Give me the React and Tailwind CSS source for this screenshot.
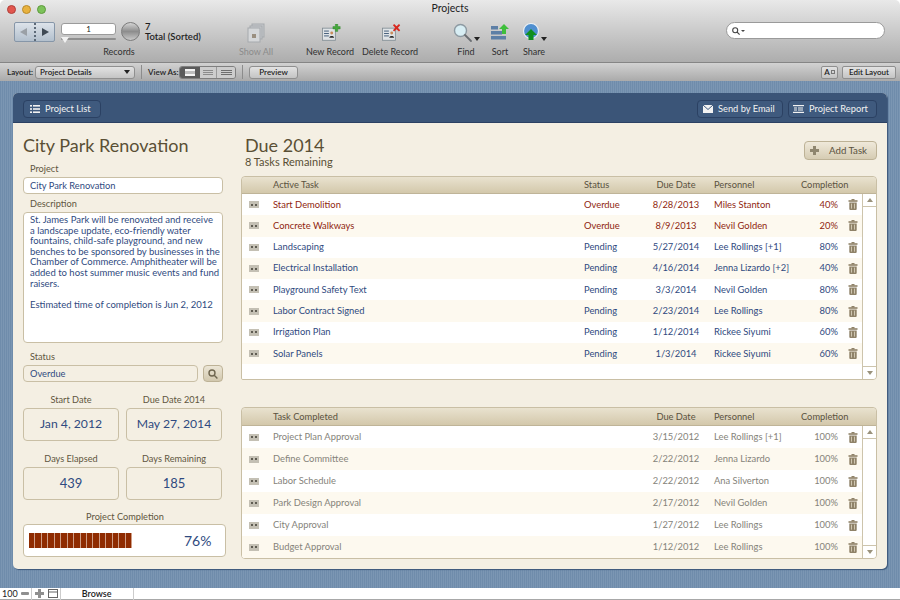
import React from "react";

const activeTasks = [
  { name: "Start Demolition", status: "Overdue", due: "8/28/2013", who: "Miles Stanton", pct: "40%", late: true },
  { name: "Concrete Walkways", status: "Overdue", due: "8/9/2013", who: "Nevil Golden", pct: "20%", late: true },
  { name: "Landscaping", status: "Pending", due: "5/27/2014", who: "Lee Rollings [+1]", pct: "80%" },
  { name: "Electrical Installation", status: "Pending", due: "4/16/2014", who: "Jenna Lizardo [+2]", pct: "40%" },
  { name: "Playground Safety Text", status: "Pending", due: "3/3/2014", who: "Nevil Golden", pct: "80%" },
  { name: "Labor Contract Signed", status: "Pending", due: "2/23/2014", who: "Lee Rollings", pct: "80%" },
  { name: "Irrigation Plan", status: "Pending", due: "1/12/2014", who: "Rickee Siyumi", pct: "60%" },
  { name: "Solar Panels", status: "Pending", due: "1/3/2014", who: "Rickee Siyumi", pct: "60%" },
];

const doneTasks = [
  { name: "Project Plan Approval", due: "3/15/2012", who: "Lee Rollings [+1]" },
  { name: "Define Committee", due: "2/22/2012", who: "Jenna Lizardo" },
  { name: "Labor Schedule", due: "2/22/2012", who: "Ana Silverton" },
  { name: "Park Design Approval", due: "2/17/2012", who: "Nevil Golden" },
  { name: "City Approval", due: "1/27/2012", who: "Lee Rollings" },
  { name: "Budget Approval", due: "1/12/2012", who: "Lee Rollings" },
];

const descriptionLines = [
  "St. James Park will be renovated and receive",
  "a landscape update, eco-friendly water",
  "fountains, child-safe playground, and new",
  "benches to be sponsored by businesses in the",
  "Chamber of Commerce. Amphitheater will be",
  "added to host summer music events and fund",
  "raisers.",
];

const gridCols = "grid grid-cols-[31px_311px_62px_60px_8px_81px_43px_26px] items-center";

function TrashIcon() {
  return (
    <svg width="10" height="11" viewBox="0 0 10 11" fill="#8f8268">
      <rect x="3.5" y="0" width="3" height="1.5" />
      <rect x="0.5" y="1.2" width="9" height="1.6" />
      <path d="M1.3 3.4h7.4v6.6a1 1 0 0 1-1 1H2.3a1 1 0 0 1-1-1z" />
      <rect x="3" y="4.6" width="1" height="5" fill="#cfc6b0" />
      <rect x="6" y="4.6" width="1" height="5" fill="#cfc6b0" />
    </svg>
  );
}

function RowHandle() {
  return (
    <div className="ml-[7px] flex h-[7px] w-[10px] items-center justify-center gap-[2px] bg-[#c4c0b4]">
      <span className="h-[2px] w-[2px] bg-[#5f5c52]" />
      <span className="h-[2px] w-[2px] bg-[#5f5c52]" />
    </div>
  );
}

function RecordIcon({ badge }) {
  return (
    <svg width="21" height="18" viewBox="0 0 26 22">
      <rect x="3" y="5" width="16" height="15" fill="#dfe3e6" stroke="#7f8a92" />
      <rect x="5" y="8" width="6" height="1.2" fill="#46607c" />
      <rect x="5" y="11" width="6" height="1.2" fill="#46607c" />
      <rect x="5" y="14" width="6" height="1.2" fill="#46607c" />
      <circle cx="14.5" cy="11" r="1.8" fill="#c98d5c" />
      <path d="M11.5 17c0-3 6-3 6 0z" fill="#2b2b2b" />
      {badge === "plus" && <path d="M16 3h3V0h3v3h3v3h-3v3h-3V6h-3z" fill="#45a83c" stroke="#2f7f2a" strokeWidth="0.5" />}
      {badge === "x" && <path d="M16 1.5 17.5 0 20.5 2.5 23.5 0 25 1.5 22.2 4.5 25 7.5 23.5 9 20.5 6.5 17.5 9 16 7.5 18.8 4.5z" fill="#d8281f" />}
    </svg>
  );
}

function ToolItem({ width, label, muted, children }) {
  return (
    <div className={`flex flex-col items-center ${width}`}>
      <div className="flex h-[22px] items-center justify-center">{children}</div>
      <div className={`mt-[2px] whitespace-nowrap text-[9px] leading-[12px] ${muted ? "text-[#8b8b8b]" : "text-[#303030]"}`}>{label}</div>
    </div>
  );
}

function DownCaret() {
  return <span className="ml-[1px] mt-[12px] h-0 w-0 border-x-[3px] border-t-[4px] border-x-transparent border-t-[#222]" />;
}

function Label({ children, className = "" }) {
  return <div className={`h-[13px] text-[9.2px] leading-[13px] text-[#5f5640] ${className}`}>{children}</div>;
}

function StatBox({ label, value, size }) {
  return (
    <div className="flex w-[96px] flex-col">
      <Label className="text-center">{label}</Label>
      <div className={`mt-[2px] flex h-[33px] items-center justify-center rounded-[4px] border border-[#c9bfa5] text-[#2f4a80] ${size}`}>
        {value}
      </div>
    </div>
  );
}

function HeaderButton({ icon, label, width }) {
  return (
    <div className={`flex h-[18px] items-center rounded-[4px] border border-[#2b4163] bg-[#3f5a7e] text-[9.3px] text-[#f2f2f2] ${width}`}>
      {icon}
      <span>{label}</span>
    </div>
  );
}

function Scrollbar() {
  return (
    <div className="flex w-[14px] flex-col justify-between border-l border-[#cdc4ac] bg-white">
      <div className="flex h-[13px] items-center justify-center border-b border-[#cdc4ac]">
        <span className="h-0 w-0 border-x-[3px] border-b-[4px] border-x-transparent border-b-[#9a927c]" />
      </div>
      <div className="flex h-[13px] items-center justify-center border-t border-[#cdc4ac]">
        <span className="h-0 w-0 border-x-[3px] border-t-[4px] border-x-transparent border-t-[#9a927c]" />
      </div>
    </div>
  );
}

function TableHeader({ first, status, h }) {
  return (
    <div className={`${gridCols} ${h} rounded-t-[4px] border-b border-[#bfb498] bg-gradient-to-b from-[#e9e2cf] to-[#d3c8ab] text-[9.3px] text-[#5a5240]`}>
      <span />
      <span>{first}</span>
      <span>{status}</span>
      <span className="text-center">Due Date</span>
      <span />
      <span>Personnel</span>
      <span className="col-span-2 pl-[6px]">Completion</span>
    </div>
  );
}

function App() {
  return (
    <div className="flex h-[600px] w-[900px] flex-col overflow-hidden bg-white font-['Lato',sans-serif]">
      {/* toolbar */}
      <div className="h-[63px] rounded-t-[5px] border-b border-[#858585] bg-gradient-to-b from-[#e9e9e9] to-[#adadad]">
        <div className="flex h-[18px] items-center pl-[7px]">
          <div className="flex gap-[6px]">
            <span className="h-[9px] w-[9px] rounded-full border border-[#b0403a] bg-[#e2564e]" />
            <span className="h-[9px] w-[9px] rounded-full border border-[#b98a2a] bg-[#e8b23e]" />
            <span className="h-[9px] w-[9px] rounded-full border border-[#5e9a3c] bg-[#7cc25a]" />
          </div>
          <div className="flex-1 pr-[46px] text-center text-[10.5px] text-[#222]">Projects</div>
        </div>
        <div className="flex pl-[14px] pt-[4px]">
          <div className="w-[212px]">
            <div className="flex h-[22px] items-start">
              <div className="flex h-[20px] w-[41px] items-center justify-between rounded-[2px] border border-[#8696a8] bg-gradient-to-b from-[#dde3ea] to-[#b3c0cd] px-[5px]">
                <span className="h-0 w-0 border-y-[4px] border-r-[7px] border-y-transparent border-r-[#9aa0a6]" />
                <span className="h-[18px] border-l-2 border-dotted border-[#5d6a78]" />
                <span className="h-0 w-0 border-y-[4px] border-l-[7px] border-y-transparent border-l-[#3f4a55]" />
              </div>
              <div className="relative ml-[6px] w-[55px]">
                <div className="mt-[1px] h-[12px] rounded-[3px] border border-[#9b9b9b] bg-white text-center text-[8px] leading-[10px] text-[#222]">1</div>
                <div className="mt-[3px] h-[2px] rounded-full bg-[#8f8f8f]" />
                <span className="absolute left-0 top-[15px] h-0 w-0 border-x-[4px] border-t-[6px] border-x-transparent border-t-[#f2f2f2]" />
              </div>
              <div className="ml-[5px] h-[19px] w-[19px] rounded-full border border-[#7b7b7b] bg-gradient-to-b from-[#d4d4d4] via-[#8d8d8d] to-[#c9c9c9]" />
              <div className="ml-[5px] text-[9.5px] font-semibold leading-[10px] text-[#1f1f1f]">
                <div>7</div>
                <div>Total (Sorted)</div>
              </div>
            </div>
            <div className="mt-[2px] w-[210px] text-center text-[9px] leading-[12px] text-[#303030]">Records</div>
          </div>
          <ToolItem width="w-[60px]" label="Show All" muted>
            <svg width="20" height="20" viewBox="0 0 20 20" fill="#c6c9cc" stroke="#a5a9ad">
              <rect x="6" y="1" width="12" height="13" />
              <rect x="4" y="3" width="12" height="13" />
              <rect x="2" y="5" width="12" height="14" fill="#d5d7d9" />
              <rect x="6" y="11" width="4" height="4" fill="#9a8f80" stroke="none" />
            </svg>
          </ToolItem>
          <div className="w-[14px]" />
          <ToolItem width="w-[60px]" label="New Record"><RecordIcon badge="plus" /></ToolItem>
          <ToolItem width="w-[60px]" label="Delete Record"><RecordIcon badge="x" /></ToolItem>
          <div className="w-[29px]" />
          <ToolItem width="w-[34px]" label="Find">
            <svg width="20" height="20" viewBox="0 0 20 20">
              <circle cx="7.5" cy="7.5" r="6" fill="#d8eef4" stroke="#8d9aa2" strokeWidth="1.4" />
              <path d="M12 12l6 6" stroke="#6a6e72" strokeWidth="1.8" strokeLinecap="round" />
            </svg>
            <DownCaret />
          </ToolItem>
          <ToolItem width="w-[34px]" label="Sort">
            <svg width="20" height="20" viewBox="0 0 20 20">
              <rect x="1" y="3" width="7" height="3.5" fill="#5d7fa6" />
              <rect x="1" y="8" width="11" height="3.5" fill="#5d7fa6" />
              <rect x="1" y="13" width="15" height="3.5" fill="#5d7fa6" />
              <path d="M14 1l5 5h-3v5h-4V6H9z" fill="#3fbf3c" />
            </svg>
          </ToolItem>
          <ToolItem width="w-[34px]" label="Share">
            <svg width="18" height="20" viewBox="0 0 18 20">
              <circle cx="9" cy="8" r="7.5" fill="#4f8fd0" stroke="#e8eef4" strokeWidth="1.2" />
              <path d="M9 6l6 6h-3.5v5h-5v-5H3z" fill="#0f8f1e" />
            </svg>
            <DownCaret />
          </ToolItem>
          <div className="w-[175px]" />
          <div className="flex h-[17px] w-[159px] items-center rounded-full border border-[#9a9a9a] bg-white pl-[5px]">
            <svg width="8" height="8" viewBox="0 0 8 8" fill="none" stroke="#444" strokeWidth="1.1">
              <circle cx="3.2" cy="3.2" r="2.5" />
              <path d="M5 5l2.6 2.6" />
            </svg>
            <span className="ml-[1px] h-0 w-0 border-x-[2px] border-t-[2px] border-x-transparent border-t-[#444]" />
          </div>
        </div>
      </div>

      {/* layout bar */}
      <div className="flex h-[18px] items-center bg-gradient-to-b from-[#d2d2d2] to-[#aaaaaa] pl-[7px] text-[8px] font-semibold text-[#222]">
        <span className="w-[28px]">Layout:</span>
        <div className="flex h-[13px] w-[100px] items-center justify-between rounded-[3px] border border-[#8f8f8f] bg-gradient-to-b from-[#e2e2e2] to-[#c4c4c4] px-[4px]">
          <span>Project Details</span>
          <span className="h-0 w-0 border-x-[3px] border-t-[4px] border-x-transparent border-t-[#222]" />
        </div>
        <span className="ml-[6px] h-[14px] border-l border-[#8c8c8c]" />
        <span className="ml-[6px] w-[31px]">View As:</span>
        <div className="flex h-[13px] w-[57px] overflow-hidden rounded-[3px] border border-[#7f7f7f]">
          <div className="flex w-[20px] items-center justify-center bg-[#5a5a5a]">
            <span className="h-[7px] w-[10px] border-y-2 border-[#f4f4f4] bg-[#bdbdbd]" />
          </div>
          <div className="flex flex-1 flex-col items-center justify-center gap-[1px] bg-[#cdcdcd]">
            <span className="h-px w-[10px] bg-[#8c8c8c]" />
            <span className="h-px w-[10px] bg-[#8c8c8c]" />
            <span className="h-px w-[10px] bg-[#8c8c8c]" />
          </div>
          <div className="flex w-[19px] flex-col items-center justify-center gap-[1px] border-l border-[#9a9a9a] bg-[#cdcdcd]">
            <span className="h-px w-[11px] bg-[#6f6f6f]" />
            <span className="h-px w-[11px] bg-[#6f6f6f]" />
            <span className="h-px w-[11px] bg-[#6f6f6f]" />
          </div>
        </div>
        <span className="ml-[6px] h-[14px] border-l border-[#8c8c8c]" />
        <div className="ml-[6px] flex h-[13px] w-[49px] items-center justify-center rounded-[3px] border border-[#8f8f8f] bg-gradient-to-b from-[#e2e2e2] to-[#c4c4c4]">Preview</div>
        <div className="ml-[523px] flex h-[13px] w-[17px] items-center justify-center gap-[1px] rounded-[2px] border border-[#8f8f8f] bg-gradient-to-b from-[#e2e2e2] to-[#c4c4c4]">
          A
          <span className="h-[4px] w-[4px] border border-[#777]" />
        </div>
        <div className="ml-[4px] flex h-[13px] w-[54px] items-center justify-center rounded-[2px] border border-[#8f8f8f] bg-gradient-to-b from-[#e2e2e2] to-[#c4c4c4]">Edit Layout</div>
      </div>

      {/* striped page */}
      <div className="h-[507px] bg-[repeating-linear-gradient(90deg,#6f8cab_0px,#6f8cab_1px,#7b96b3_1px,#7b96b3_2px)] pl-[13px] pt-[12px]">
        <div className="h-[476px] w-[874px] overflow-hidden rounded-[5px] bg-[#f4efe3] shadow-[1px_1px_1px_#3b5578]">
          <div className="flex h-[30px] items-center justify-between border-b border-[#2b4163] bg-[#3b5578] pl-[10px] pr-[10px] pt-[2px]">
            <HeaderButton
              width="w-[78px]"
              label="Project List"
              icon={
                <svg className="ml-[6px] mr-[5px] shrink-0" width="10" height="8" viewBox="0 0 10 8" fill="#f2f2f2">
                  <rect x="0" y="0" width="2" height="1.6" />
                  <rect x="3" y="0" width="7" height="1.6" />
                  <rect x="0" y="3.2" width="2" height="1.6" />
                  <rect x="3" y="3.2" width="7" height="1.6" />
                  <rect x="0" y="6.4" width="2" height="1.6" />
                  <rect x="3" y="6.4" width="7" height="1.6" />
                </svg>
              }
            />
            <div className="flex gap-[5px]">
              <HeaderButton
                width="w-[86px]"
                label="Send by Email"
                icon={
                  <svg className="ml-[5px] mr-[5px] shrink-0" width="10" height="8" viewBox="0 0 10 8">
                    <rect width="10" height="8" fill="#f2f2f2" />
                    <path d="M0 0l5 4.5L10 0" fill="none" stroke="#3f5a7e" strokeWidth="1" />
                  </svg>
                }
              />
              <HeaderButton
                width="w-[89px]"
                label="Project Report"
                icon={
                  <svg className="ml-[4px] mr-[5px] shrink-0" width="11" height="8" viewBox="0 0 11 8" fill="#f2f2f2">
                    <rect x="0" y="0" width="11" height="1.2" />
                    <rect x="0" y="6.8" width="11" height="1.2" />
                    <rect x="1" y="2.5" width="3" height="1" />
                    <rect x="1" y="4.5" width="3" height="1" />
                    <rect x="5" y="2.5" width="5" height="1" />
                    <rect x="5" y="4.5" width="5" height="1" />
                  </svg>
                }
              />
            </div>
          </div>

          <div className="flex pl-[10px]">
            {/* left column */}
            <div className="flex w-[204px] flex-col pt-[10px]">
              <div className="h-[24px] text-[18px] leading-[24px] text-[#5a4f35]">City Park Renovation</div>
              <Label className="mt-[5px] pl-[7px]">Project</Label>
              <div className="mt-[2px] h-[17px] w-[200px] rounded-[4px] border border-[#c9bfa5] bg-white pl-[6px] text-[9.3px] leading-[15px] text-[#2f4a80]">City Park Renovation</div>
              <Label className="mt-[3px] pl-[7px]">Description</Label>
              <div className="mt-[2px] h-[131px] w-[200px] whitespace-nowrap rounded-[4px] border border-[#c9bfa5] bg-white px-[6px] pt-[2px] text-[9.5px] leading-[10.6px] text-[#2f4a80]">
                {descriptionLines.map((line) => (
                  <div key={line}>{line}</div>
                ))}
                <div className="mt-[10.6px]">Estimated time of completion is Jun 2, 2012</div>
              </div>
              <Label className="mt-[7px] pl-[7px]">Status</Label>
              <div className="mt-[2px] flex">
                <div className="h-[17px] w-[175px] rounded-[4px] border border-[#c9bfa5] pl-[6px] text-[9.3px] leading-[15px] text-[#2f4a80]">Overdue</div>
                <div className="ml-[5px] flex h-[17px] w-[20px] items-center justify-center rounded-[4px] border border-[#bdb296] bg-gradient-to-b from-[#ece6d6] to-[#d2c8ae]">
                  <svg width="10" height="10" viewBox="0 0 10 10" fill="none" stroke="#6f664f" strokeWidth="1.4">
                    <circle cx="4" cy="4" r="3" />
                    <path d="M6.2 6.2 9.4 9.4" />
                  </svg>
                </div>
              </div>
              <div className="mt-[11px] flex gap-[7px]">
                <StatBox label="Start Date" value="Jan 4, 2012" size="text-[12.2px]" />
                <StatBox label="Due Date 2014" value="May 27, 2014" size="text-[12.2px]" />
              </div>
              <div className="mt-[11px] flex gap-[7px]">
                <StatBox label="Days Elapsed" value="439" size="text-[13px]" />
                <StatBox label="Days Remaining" value="185" size="text-[13px]" />
              </div>
              <Label className="mt-[10px] text-center">Project Completion</Label>
              <div className="mt-[1px] flex h-[33px] w-[203px] items-center rounded-[4px] border border-[#c9bfa5] bg-white pl-[5px]">
                <div className="flex h-[15px] w-[103px]">
                  {Array.from({ length: 16 }).map((_, i) => (
                    <span key={i} className="flex-1 border-r border-[#cf9d86] bg-[#8f2b00]" />
                  ))}
                </div>
                <span className="ml-[52px] text-[14px] text-[#2f4a80]">76%</span>
              </div>
            </div>

            {/* right column */}
            <div className="ml-[14px] flex w-[636px] flex-col pt-[9px]">
              <div className="flex h-[44px] justify-between">
                <div className="pl-[4px]">
                  <div className="h-[24px] pt-[1px] text-[18px] leading-[24px] text-[#5a4f35]">Due 2014</div>
                  <div className="h-[14px] text-[11px] leading-[12px] text-[#5a4f35]">8 Tasks Remaining</div>
                </div>
                <div className="mt-[9px] flex h-[19px] w-[73px] items-center rounded-[4px] border border-[#bdb296] bg-gradient-to-b from-[#efe9da] to-[#d6ccb3] pl-[5px] text-[9.7px] text-[#5a5240]">
                  <svg className="mr-[10px]" width="9" height="9" viewBox="0 0 9 9" fill="#8f866f">
                    <rect x="3" y="0" width="3" height="9" />
                    <rect x="0" y="3" width="9" height="3" />
                  </svg>
                  Add Task
                </div>
              </div>

              {/* active tasks */}
              <div className="h-[204px] overflow-hidden rounded-[4px] rounded-bl-[2px] border border-[#c9bfa5]">
                <TableHeader first="Active Task" status="Status" h="h-[17px]" />
                <div className="flex h-[185px]">
                  <div className="w-[620px] bg-white">
                    {activeTasks.map((t, i) => (
                      <div
                        key={t.name}
                        className={`${gridCols} h-[21.3px] text-[9.4px] ${i % 2 ? "bg-[#fdf9ef]" : "bg-white"} ${t.late ? "text-[#8f1f10]" : "text-[#2f4a80]"}`}
                      >
                        <RowHandle />
                        <span>{t.name}</span>
                        <span>{t.status}</span>
                        <span className="text-center">{t.due}</span>
                        <span />
                        <span className="whitespace-nowrap">{t.who}</span>
                        <span className="text-right">{t.pct}</span>
                        <span className="flex justify-end pr-[6px]"><TrashIcon /></span>
                      </div>
                    ))}
                  </div>
                  <Scrollbar />
                </div>
              </div>

              {/* completed tasks */}
              <div className="mt-[27px] h-[152px] overflow-hidden rounded-[4px] border border-[#c9bfa5]">
                <TableHeader first="Task Completed" status="" h="h-[18px]" />
                <div className="flex h-[132px]">
                  <div className="w-[620px] bg-white">
                    {doneTasks.map((t, i) => (
                      <div
                        key={t.name}
                        className={`${gridCols} h-[22px] text-[9.4px] text-[#85837a] ${i % 2 ? "bg-[#fdf9ef]" : "bg-white"}`}
                      >
                        <RowHandle />
                        <span>{t.name}</span>
                        <span />
                        <span className="text-center">{t.due}</span>
                        <span />
                        <span className="whitespace-nowrap">{t.who}</span>
                        <span className="text-right">100%</span>
                        <span className="flex justify-end pr-[6px]"><TrashIcon /></span>
                      </div>
                    ))}
                  </div>
                  <Scrollbar />
                </div>
              </div>
            </div>
          </div>
        </div>
      </div>

      {/* status bar */}
      <div className="flex h-[12px] items-center border-b border-[#a8a8a8] bg-white text-[9px] leading-[11px] text-[#222]">
        <span className="pl-[2px]">100</span>
        <span className="ml-[3px] h-[3px] w-[8px] rounded-[1px] bg-[#8f8f8f]" />
        <span className="ml-[2px] h-[12px] border-l border-[#cccccc]" />
        <svg className="ml-[3px]" width="9" height="9" viewBox="0 0 9 9" fill="#8f8f8f">
          <rect x="3" y="0" width="3" height="9" />
          <rect x="0" y="3" width="9" height="3" />
        </svg>
        <svg className="ml-[4px]" width="10" height="9" viewBox="0 0 10 9" fill="none" stroke="#666">
          <rect x="0.5" y="0.5" width="9" height="8" />
          <path d="M0.5 3h9" />
        </svg>
        <span className="ml-[2px] h-[12px] border-l border-[#cccccc]" />
        <span className="w-[72px] text-center font-semibold text-[9px]">Browse</span>
        <span className="h-[12px] border-l border-[#cccccc]" />
      </div>
    </div>
  );
}

export default App;
